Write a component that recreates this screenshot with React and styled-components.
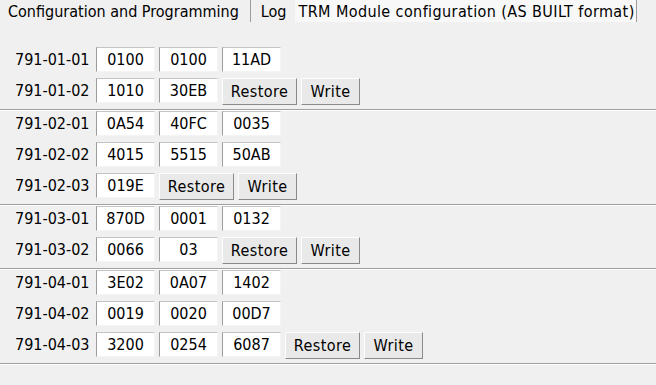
import React from "react";
import styled, { createGlobalStyle } from "styled-components";

const Global = createGlobalStyle`
  html, body {
    margin: 0;
    padding: 0;
    background: #f0f0f0;
  }
  body {
    width: 656px;
    height: 385px;
    overflow: hidden;
    font-family: "DejaVu Sans Condensed", "DejaVu Sans", sans-serif;
    font-stretch: condensed;
    font-size: 16px;
    color: #000;
  }
`;

const Window = styled.div({
    width: 656,
    height: 385,
    background: '#f0f0f0',
    display: 'flex',
    flexDirection: 'column'
});

const TabBar = styled.div({
    display: 'flex',
    height: 23,
    alignItems: 'stretch'
});

const Tab = styled.div`
  padding: 0 ${p => p.$padRight}px 0 ${p => p.$padLeft}px;
  line-height: 23px;
  height: 22px;
  white-space: nowrap;
  letter-spacing: ${p => p.$spacing || 0}px;
  background: ${p => (p.$active ? '#f8f8f8' : '#f0f0f0')};
  border-right: ${p => (p.$divider ? '1px solid #9c9c9c' : '1px solid transparent')};
`;

const Content = styled.div({
    marginTop: 23
});

const Group = styled.div({
    display: 'flex',
    flexDirection: 'column',
    gap: 4,
    padding: '1px 0 4px',
    borderBottom: '1px solid #a0a0a0',
    boxShadow: '0 1px 0 #ffffff'
});

const Row = styled.div({
    display: 'flex',
    alignItems: 'flex-start',
    gap: 4,
    height: 27,
    paddingLeft: 15
});

const Label = styled.div({
    width: 77,
    lineHeight: '26px',
    whiteSpace: 'nowrap'
});

const Cell = styled.div({
    width: 57,
    height: 23,
    lineHeight: '24px',
    textAlign: 'center',
    background: '#ffffff',
    borderStyle: 'solid',
    borderWidth: 1,
    borderColor: '#c4c4c4 #f4f4f4 #f4f4f4 #9c9c9c'
});

const Button = styled.div`
  width: ${p => p.$w}px;
  height: 25px;
  line-height: 26px;
  text-align: center;
  letter-spacing: 0.4px;
  background: #e9e9e9;
  border: 1px solid;
  border-color: #fdfdfd #8a8a8a #8a8a8a #fdfdfd;
`;

const data = [
    [
        { id: '791-01-01', vals: ['0100', '0100', '11AD'] },
        { id: '791-01-02', vals: ['1010', '30EB'], actions: true }
    ],
    [
        { id: '791-02-01', vals: ['0A54', '40FC', '0035'] },
        { id: '791-02-02', vals: ['4015', '5515', '50AB'] },
        { id: '791-02-03', vals: ['019E'], actions: true }
    ],
    [
        { id: '791-03-01', vals: ['870D', '0001', '0132'] },
        { id: '791-03-02', vals: ['0066', '03'], actions: true }
    ],
    [
        { id: '791-04-01', vals: ['3E02', '0A07', '1402'] },
        { id: '791-04-02', vals: ['0019', '0020', '00D7'] },
        { id: '791-04-03', vals: ['3200', '0254', '6087'], actions: true }
    ]
];

class App extends React.Component {
    render() {
        return (
            <Window>
                <Global />
                <TabBar>
                    <Tab $divider $padLeft={8} $padRight={11}>Configuration and Programming</Tab>
                    <Tab $padLeft={10} $padRight={7}>Log</Tab>
                    <Tab $active $divider $padLeft={4} $padRight={1} $spacing={0.4}>TRM Module configuration (AS BUILT format)</Tab>
                </TabBar>
                <Content>
                    {data.map((group, gi) => (
                        <Group key={gi}>
                            {group.map(row => (
                                <Row key={row.id}>
                                    <Label>{row.id}</Label>
                                    {row.vals.map((v, i) => <Cell key={i}>{v}</Cell>)}
                                    {row.actions && <Button $w={73}>Restore</Button>}
                                    {row.actions && <Button $w={57}>Write</Button>}
                                </Row>
                            ))}
                        </Group>
                    ))}
                </Content>
            </Window>
        );
    }
}

export default App;
